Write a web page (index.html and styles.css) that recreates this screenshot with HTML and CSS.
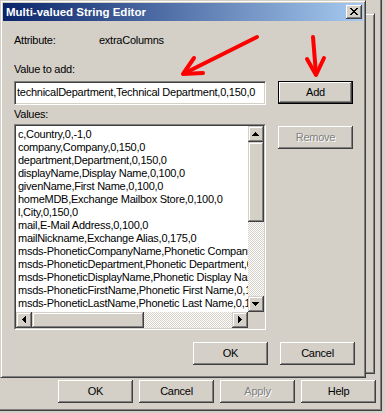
FILE: index.html
```html
<!DOCTYPE html>
<html>
<head>
<meta charset="utf-8">
<link rel="stylesheet" href="styles.css">
</head>
<body>
<div class="sheet">
  <div class="sheet-buttons">
    <button class="btn">OK</button>
    <button class="btn">Cancel</button>
    <button class="btn disabled">Apply</button>
    <button class="btn">Help</button>
  </div>
</div>
<div class="win back"></div>
<div class="win dialog">
  <div class="titlebar">
    <span class="title">Multi-valued String Editor</span>
    <span class="close"><svg width="16" height="14" viewBox="0 0 16 14"><path fill="#000" d="M4 3h2v1H4z M10 3h2v1h-2z M5 4h2v1H5z M9 4h2v1H9z M6 5h4v1H6z M7 6h2v1H7z M6 7h4v1H6z M5 8h2v1H5z M9 8h2v1H9z M4 9h2v1H4z M10 9h2v1h-2z"/></svg></span>
  </div>
  <div class="client">
    <div class="attr-row"><span class="attr-lbl">Attribute:</span><span>extraColumns</span></div>
    <div class="lbl value-lbl">Value to add:</div>
    <div class="input-row">
      <div class="field">technicalDepartment,Technical Department,0,150,0</div>
      <button class="btn default">Add</button>
    </div>
    <div class="lbl values-lbl">Values:</div>
    <div class="list-row">
      <div class="listbox">
        <div class="lb-inner">
          <div class="items">
            <div>c,Country,0,-1,0</div>
            <div>company,Company,0,150,0</div>
            <div>department,Department,0,150,0</div>
            <div>displayName,Display Name,0,100,0</div>
            <div>givenName,First Name,0,100,0</div>
            <div>homeMDB,Exchange Mailbox Store,0,100,0</div>
            <div>l,City,0,150,0</div>
            <div>mail,E-Mail Address,0,100,0</div>
            <div>mailNickname,Exchange Alias,0,175,0</div>
            <div>msds-PhoneticCompanyName,Phonetic Company Name,0,100,0</div>
            <div>msds-PhoneticDepartment,Phonetic Department,0,100,0</div>
            <div>msds-PhoneticDisplayName,Phonetic Display Name,0,100,0</div>
            <div>msds-PhoneticFirstName,Phonetic First Name,0,100,0</div>
            <div>msds-PhoneticLastName,Phonetic Last Name,0,100,0</div>
            <div>physicalDeliveryOfficeName,Office,0,100,0</div>
          </div>
          <div class="vscroll">
            <span class="sbtn"><svg width="16" height="16" viewBox="0 0 16 16"><path d="M7 6h1v1H7z M6 7h3v1H6z M5 8h5v1H5z M4 9h7v1H4z"/></svg></span>
            <span class="thumb vthumb"></span>
            <span class="track"></span>
            <span class="sbtn"><svg width="16" height="16" viewBox="0 0 16 16"><path d="M4 6h7v1H4z M5 7h5v1H5z M6 8h3v1H6z M7 9h1v1H7z"/></svg></span>
          </div>
          <div class="hscroll">
            <span class="sbtn"><svg width="16" height="16" viewBox="0 0 16 16"><path d="M6 7h1v1H6z M7 6h1v3H7z M8 5h1v5H8z M9 4h1v7H9z"/></svg></span>
            <span class="thumb hthumb"></span>
            <span class="track"></span>
            <span class="sbtn"><svg width="16" height="16" viewBox="0 0 16 16"><path d="M6 4h1v7H6z M7 5h1v5H7z M8 6h1v3H8z M9 7h1v1H9z"/></svg></span>
          </div>
          <div class="corner"></div>
        </div>
      </div>
      <button class="btn disabled remove">Remove</button>
    </div>
    <div class="footer">
      <button class="btn">OK</button>
      <button class="btn">Cancel</button>
    </div>
  </div>
</div>
<svg class="annot" width="385" height="413" viewBox="0 0 385 413">
  <g fill="none" stroke="#ff0000" stroke-width="4" stroke-linecap="round" stroke-linejoin="round">
    <path d="M257 37 L185 73"/>
    <path d="M194 58 L183 74 L203 73"/>
    <path d="M313 37 L316 74"/>
    <path d="M307 59 L316 75 L324 58"/>
  </g>
</svg>
</body>
</html>
```

FILE: styles.css
```css
* { box-sizing: border-box; }
html, body { margin: 0; padding: 0; }
body {
  width: 385px;
  height: 413px;
  overflow: hidden;
  position: relative;
  background: #d4d0c8;
  font-family: "Liberation Sans", Arial, sans-serif;
  font-size: 11px;
  line-height: 13px;
  letter-spacing: -0.25px;
  color: #000;
}

/* generic classic push button */
.btn {
  appearance: none;
  -webkit-appearance: none;
  margin: 0;
  padding: 0;
  border: none;
  width: 75px;
  height: 23px;
  flex: none;
  background: #d4d0c8;
  font: inherit;
  letter-spacing: inherit;
  line-height: 23px;
  color: #000;
  text-align: center;
  box-shadow: inset -1px -1px #404040, inset 1px 1px #fff, inset -2px -2px #808080;
}
.btn.default {
  box-shadow: inset 0 0 0 1px #000, inset -2px -2px #404040, inset 2px 2px #fff, inset -3px -3px #808080;
}
.btn.disabled {
  color: #808080;
  text-shadow: 1px 1px #fff;
}

/* outer property sheet */
.sheet {
  width: 382px;
  height: 411px;
  display: flex;
  flex-direction: column;
  justify-content: flex-end;
  align-items: flex-end;
  border-right: 1px solid #404040;
  border-bottom: 1px solid #404040;
  box-shadow: inset -1px -1px #808080;
  padding: 0 5px 7px 0;
}
.sheet-buttons {
  display: flex;
  gap: 6px;
}

/* windows */
.win {
  position: absolute;
  background: #d4d0c8;
  border: 1px solid;
  border-color: #d4d0c8 #404040 #404040 #d4d0c8;
  box-shadow: inset 1px 1px #fff, inset -1px -1px #808080;
}
.back {
  left: 200px;
  top: 13px;
  width: 175px;
  height: 361px;
}
.dialog {
  left: 0;
  top: 0;
  width: 366px;
  height: 378px;
  padding: 2px;
  display: flex;
  flex-direction: column;
}

.titlebar {
  height: 18px;
  flex: none;
  display: flex;
  align-items: center;
  justify-content: space-between;
  padding: 0 1px 0 3px;
  background: linear-gradient(to right, #0a246a, #a6caf0);
  color: #fff;
  font-weight: bold;
  font-size: 11.5px;
  letter-spacing: 0;
  line-height: 18px;
}
.close {
  width: 16px;
  height: 14px;
  display: block;
  background: #d4d0c8;
  box-shadow: inset -1px -1px #404040, inset 1px 1px #fff, inset -2px -2px #808080;
}
.close svg { display: block; }

.client {
  flex: 1;
  display: flex;
  flex-direction: column;
  padding: 13px 8px 0 11px;
}
.attr-row {
  display: flex;
  height: 13px;
}
.attr-lbl { width: 85px; }
.lbl { height: 13px; }
.value-lbl { margin-top: 16px; }
.input-row {
  margin-top: 5px;
  display: flex;
  align-items: flex-start;
  gap: 12px;
}
.field {
  width: 252px;
  height: 24px;
  background: #fff;
  border: 1px solid;
  border-color: #808080 #fff #fff #808080;
  box-shadow: inset 1px 1px #404040, inset -1px -1px #d4d0c8;
  padding: 4px 0 0 2px;
  white-space: nowrap;
  overflow: hidden;
}
.values-lbl { margin-top: 3px; }
.list-row {
  margin-top: 3px;
  display: flex;
  align-items: flex-start;
  gap: 12px;
}
.remove { margin-top: 2px; }

.listbox {
  width: 252px;
  height: 206px;
  border: 1px solid;
  border-color: #808080 #fff #fff #808080;
}
.lb-inner {
  height: 100%;
  border: 1px solid;
  border-color: #404040 #d4d0c8 #d4d0c8 #404040;
  background: #fff;
  display: grid;
  grid-template-columns: 1fr 16px;
  grid-template-rows: 1fr 16px;
}
.items {
  padding: 2px 0 0 2px;
  overflow: hidden;
  white-space: nowrap;
  line-height: 13px;
}
.vscroll {
  display: flex;
  flex-direction: column;
}
.hscroll {
  display: flex;
}
.sbtn, .thumb {
  display: block;
  flex: none;
  width: 16px;
  height: 16px;
  background: #d4d0c8;
  box-shadow: inset -1px -1px #404040, inset 1px 1px #d4d0c8, inset -2px -2px #808080, inset 2px 2px #fff;
}
.sbtn svg { display: block; fill: #000; }
.vthumb { height: 80px; }
.hthumb { width: 112px; }
.track {
  flex: 1;
  background: repeating-conic-gradient(#fff 0 25%, #d4d0c8 0 50%) 0 0 / 2px 2px;
}
.corner { background: #d4d0c8; }

.footer {
  margin-top: 12px;
  display: flex;
  justify-content: flex-end;
  gap: 12px;
}

.annot {
  position: absolute;
  left: 0;
  top: 0;
  pointer-events: none;
}
```
